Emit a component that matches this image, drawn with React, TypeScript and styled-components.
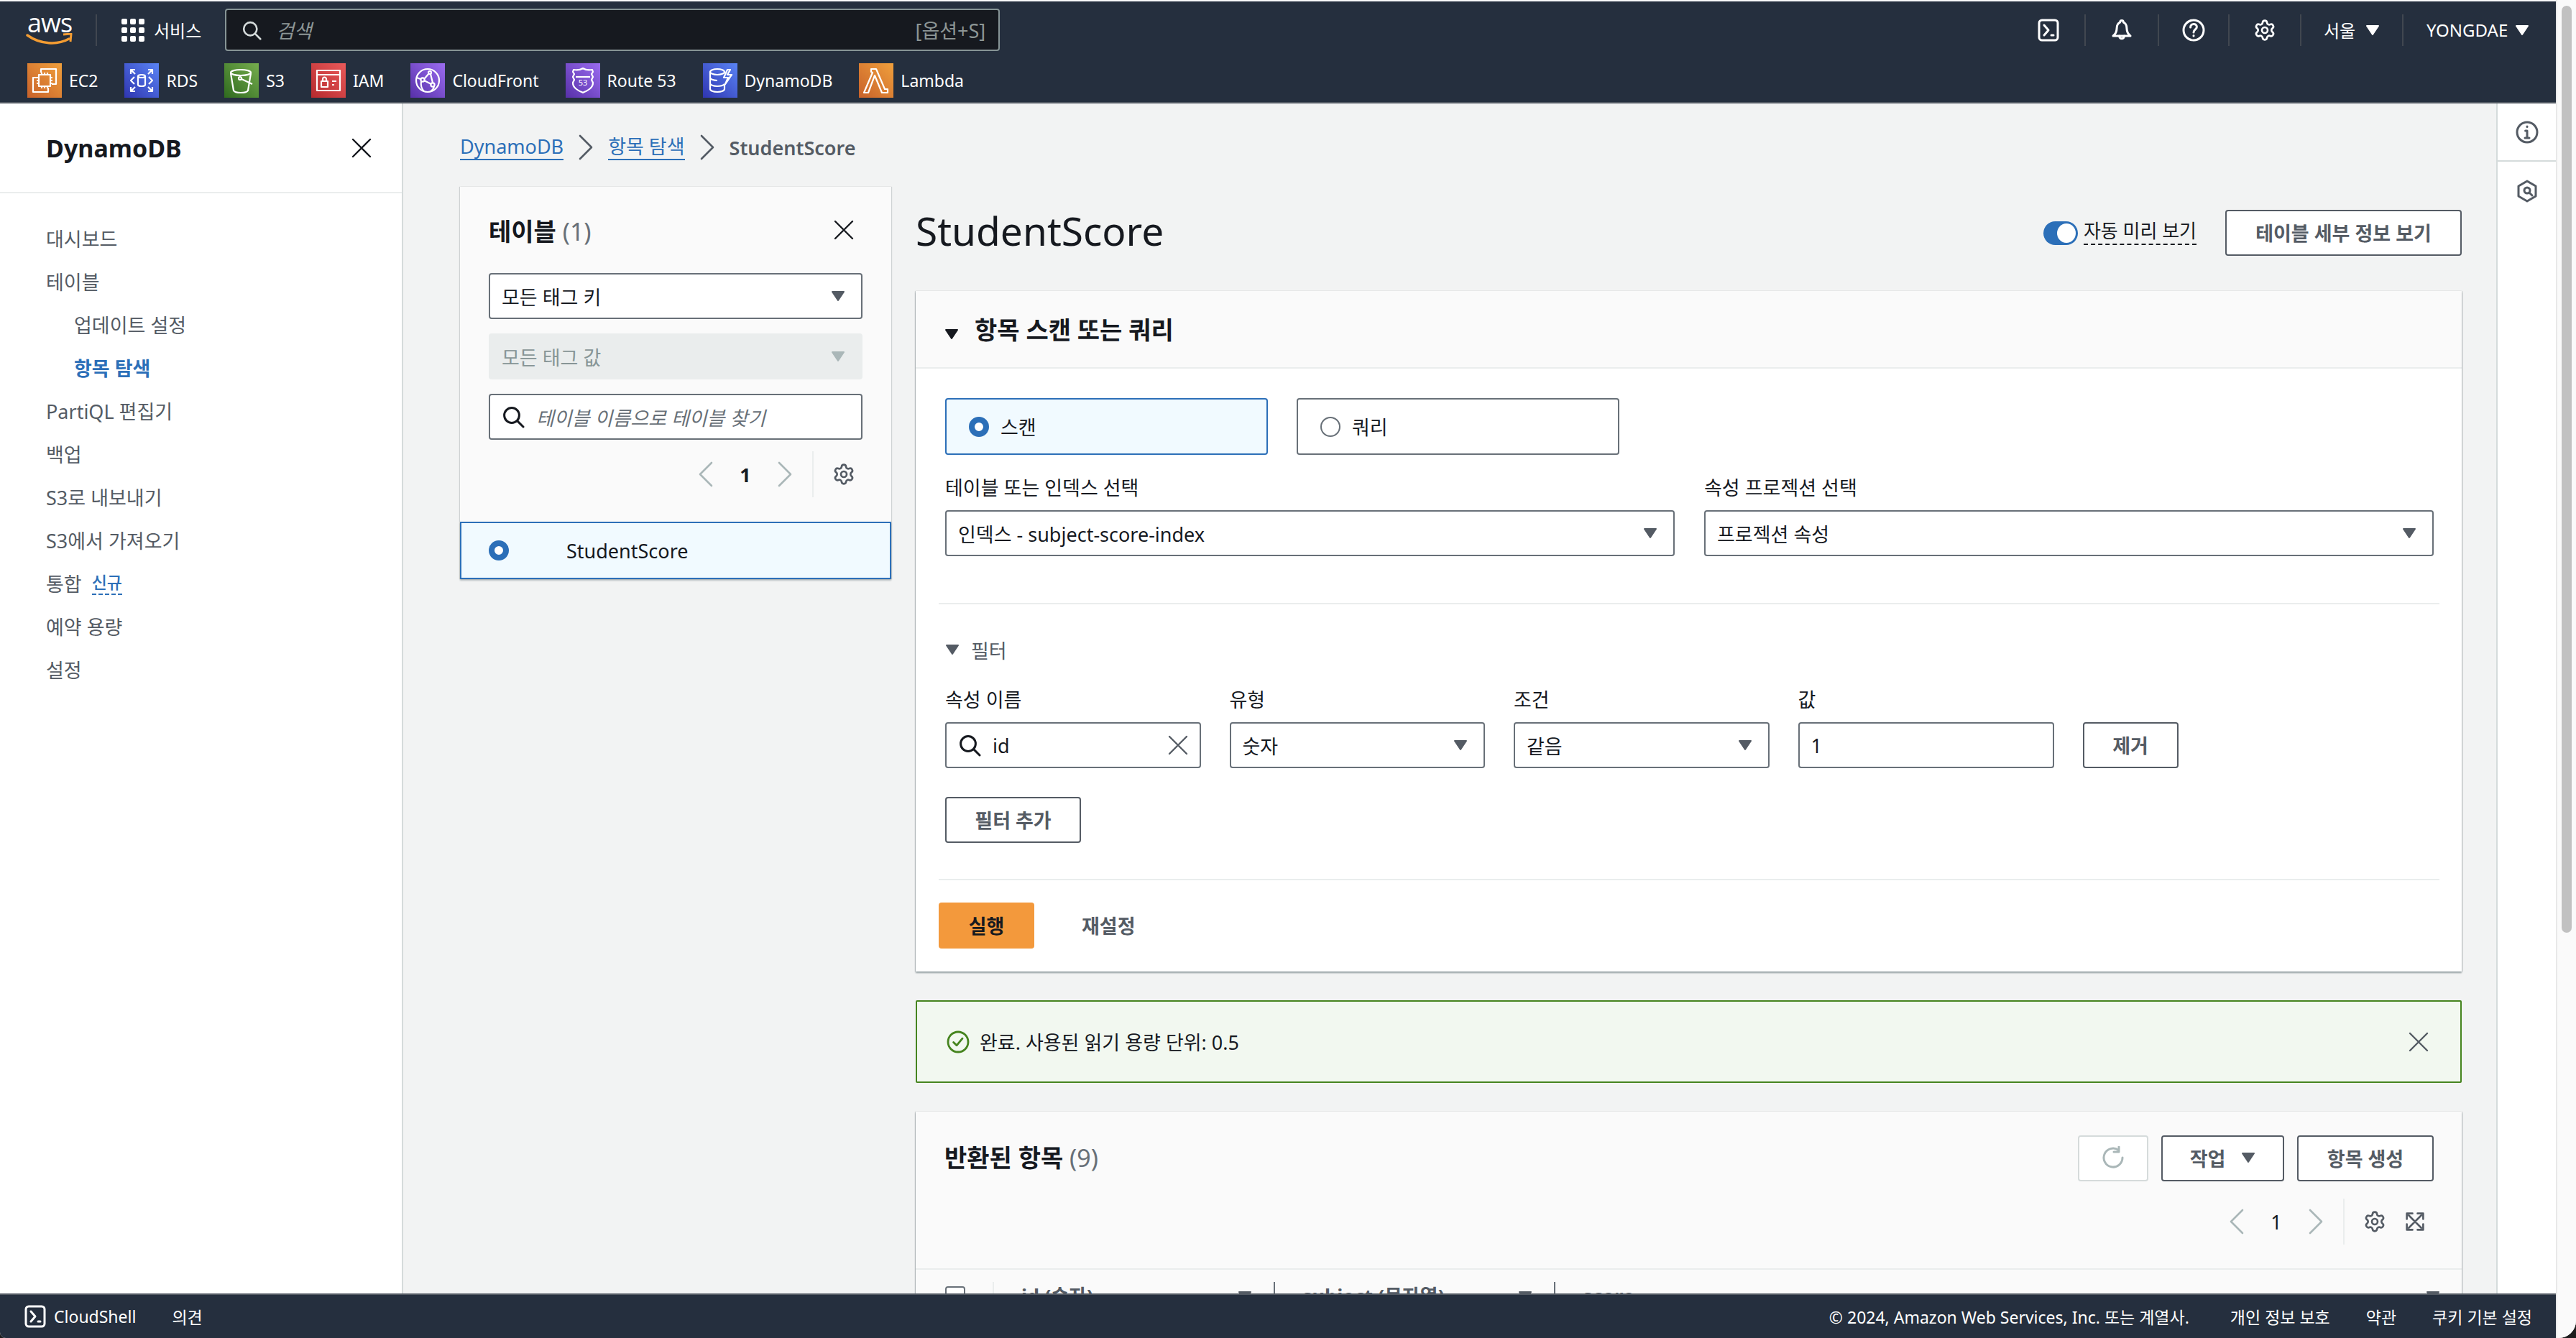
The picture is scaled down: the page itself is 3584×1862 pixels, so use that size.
import React from 'react';
import styled, {createGlobalStyle} from 'styled-components';
import {Settings} from 'lucide-react';

const GlobalStyle = createGlobalStyle`
  * { box-sizing: border-box; }
  html, body { margin: 0; padding: 0; height: 100%; overflow: hidden; background: #1c1c1c; }
  body {
    font-family: "Noto Sans", "Noto Sans CJK KR", sans-serif;
    font-size: 27px;
    color: #16191f;
  }
`

const Window = styled.div`
  display: flex;
  width: 3584px;
  height: 1862px;
  overflow: hidden;
  background: #fafafa;
  border-radius: 0 0 24px 8px;
`
const Page = styled.div`
  flex: 1;
  min-width: 0;
  display: flex;
  flex-direction: column;
`
const ScrollTrack = styled.div`
  width: 28px;
  flex: none;
  padding: 8px 6px 0 6px;
  background: #fafafa;
  border-left: 2px solid #e8e8e8;
`
const ScrollThumb = styled.div`
  height: 1290px;
  border-radius: 8px;
  background: #c1c1c1;
`

/* top navigation */
const TopNav = styled.header`
  flex: none;
  margin-top: 2px;
  padding: 10px 37px 6px 38px;
  background: #252f3e;
  border-bottom: 2px solid #545b64;
  color: #fff;
`
const NavRow = styled.div`
  display: flex;
  align-items: center;
  height: 59px;
`
const LogoBox = styled.div`
  position: relative;
  width: 62px;
  height: 48px;
  flex: none;
`
const LogoText = styled.span`
  position: absolute;
  left: 0;
  top: -10px;
  font-family: "Open Sans", sans-serif;
  font-size: 36px;
  font-weight: 500;
  letter-spacing: -1px;
  line-height: 48px;
`
const LogoSmile = styled.svg`
  position: absolute;
  left: -2px;
  top: 28px;
  width: 66px;
  height: 20px;
`
const NavDivider = styled.div`
  width: 2px;
  height: 44px;
  margin: 0 34px 0 33px;
  background: #414750;
`
const GridIcon = styled.svg`
  width: 32px;
  height: 32px;
  flex: none;
  fill: #fff;
`
const ServicesLabel = styled.span`
  margin-left: 13px;
  font-size: 24px;
  white-space: nowrap;
`
const SearchBox = styled.div`
  display: flex;
  align-items: center;
  width: 1078px;
  height: 59px;
  margin-left: 33px;
  padding: 0 18px 0 21px;
  background: #16191f;
  border: 2px solid #879596;
  border-radius: 4px;
  color: #d5dbdb;
`
const SearchHint = styled.span`
  margin-left: 20px;
  font-size: 27px;
  font-style: italic;
  color: #8d9696;
`
const SearchKey = styled.span`
  margin-left: auto;
  font-size: 27px;
  color: #8d9696;
`
const NavRight = styled.div`
  display: flex;
  align-items: center;
  height: 44px;
  margin-left: auto;
`
const Utility = styled.div<{$w: number; $start?: number}>`
  display: flex;
  align-items: center;
  justify-content: ${p => (p.$start ? 'flex-start' : 'center')};
  gap: ${p => (p.$start ? 10 : 14)}px;
  width: ${p => p.$w}px;
  height: 44px;
  padding-left: ${p => p.$start ?? 0}px;
  font-size: 24px;
  white-space: nowrap;
  &:not(:first-child) { border-left: 2px solid #414750; }
`
const ServiceRow = styled.nav`
  display: flex;
  gap: 37px;
  margin-top: 17px;
`
const ServiceItem = styled.div`
  display: flex;
  align-items: center;
  gap: 10px;
  font-size: 23px;
  line-height: 48px;
  white-space: nowrap;
`
const ServiceIcon = styled.svg<{$from: string; $to: string}>`
  width: 48px;
  height: 48px;
  flex: none;
  background: linear-gradient(45deg, ${p => p.$from}, ${p => p.$to});
  fill: none;
  stroke: #fff;
  stroke-width: 2.2;
  stroke-linejoin: round;
`

/* main area */
const Body = styled.div`
  flex: 1;
  min-height: 0;
  display: flex;
  overflow: hidden;
`
const SideNav = styled.aside`
  width: 561px;
  flex: none;
  background: #fff;
  border-right: 2px solid #d5dbdb;
`
const SideHead = styled.div`
  display: flex;
  align-items: center;
  justify-content: space-between;
  height: 125px;
  padding: 0 40px 0 64px;
  border-bottom: 2px solid #eaeded;
`
const SideTitle = styled.h2`
  margin: 0;
  font-size: 34px;
  font-weight: 700;
`
const SideList = styled.ul`
  list-style: none;
  margin: 32px 0 0 0;
  padding: 0 0 0 64px;
`
const SideItem = styled.li<{$sub?: boolean; $active?: boolean}>`
  display: flex;
  align-items: center;
  gap: 14px;
  height: 60px;
  padding-left: ${p => (p.$sub ? 39 : 0)}px;
  font-weight: ${p => (p.$active ? 700 : 400)};
  color: ${p => (p.$active ? '#2c6fb8' : '#545b64')};
`
const NewTag = styled.span`
  font-size: 23px;
  font-weight: 500;
  color: #2c6fb8;
  border-bottom: 2px dashed #2c6fb8;
  line-height: 32px;
`
const Content = styled.main`
  flex: 1;
  min-width: 0;
  padding: 0 48px 0 79px;
  background: #f2f3f3;
  overflow: hidden;
`
const Crumbs = styled.div`
  display: flex;
  align-items: center;
  gap: 19px;
  height: 116px;
  padding-top: 6px;
`
const CrumbLink = styled.span`
  color: #2c6fb8;
  border-bottom: 2px solid #2c6fb8;
  line-height: 34px;
`
const CrumbCurrent = styled.span`
  color: #545b64;
  font-weight: 600;
`
const Columns = styled.div`
  display: flex;
  align-items: flex-start;
  gap: 34px;
`
const TablePane = styled.section`
  width: 600px;
  flex: none;
  background: #fafafa;
  box-shadow: 1px 0 1px rgba(0, 28, 36, .15), -1px 0 1px rgba(0, 28, 36, .15);
`
const PaneInner = styled.div`
  padding: 34px 40px 0 40px;
`
const PaneHead = styled.div`
  display: flex;
  align-items: center;
  justify-content: space-between;
  height: 52px;
  margin-bottom: 34px;
  padding-right: 10px;
`
const HeadText = styled.h3`
  margin: 0;
  font-size: 34px;
  font-weight: 700;
  white-space: nowrap;
`
const HeadCount = styled.span`
  color: #687078;
  font-weight: 400;
`
const Stack = styled.div`
  display: flex;
  flex-direction: column;
  gap: 20px;
`
const SelectBox = styled.div<{$disabled?: boolean}>`
  display: flex;
  align-items: center;
  justify-content: space-between;
  height: 64px;
  padding: 0 22px 0 16px;
  background: ${p => (p.$disabled ? '#eaeded' : '#fff')};
  border: 2px solid ${p => (p.$disabled ? '#eaeded' : '#687078')};
  border-radius: 4px;
  color: ${p => (p.$disabled ? '#879596' : '#16191f')};
  white-space: nowrap;
`
const InputBox = styled.div`
  display: flex;
  align-items: center;
  gap: 16px;
  height: 64px;
  padding: 0 14px 0 16px;
  background: #fff;
  border: 2px solid #687078;
  border-radius: 4px;
  color: #16191f;
`
const InputHint = styled.span`
  font-style: italic;
  color: #687078;
  white-space: nowrap;
`
const InputEnd = styled.span`
  display: flex;
  margin-left: auto;
  color: #545b64;
`
const Pager = styled.div`
  display: flex;
  align-items: center;
  justify-content: flex-end;
  height: 64px;
  margin-top: 16px;
  padding-right: 10px;
`
const PagerNum = styled.span<{$bold?: boolean}>`
  width: 86px;
  text-align: center;
  font-size: 27px;
  font-weight: ${p => (p.$bold ? 700 : 400)};
`
const PagerDivider = styled.div`
  width: 2px;
  height: 64px;
  margin: 0 26px;
  background: #eaeded;
`
const TableRow = styled.div`
  display: flex;
  align-items: center;
  height: 80px;
  margin-top: 34px;
  padding-left: 38px;
  background: #f1faff;
  border: 2px solid #2c6fb8;
  box-shadow: 0 2px 2px rgba(0, 28, 36, .25);
`
const RadioDot = styled.span<{$on?: boolean}>`
  width: 28px;
  height: 28px;
  flex: none;
  border-radius: 50%;
  background: #fff;
  border: ${p => (p.$on ? '8px solid #2c6fb8' : '2px solid #687078')};
`
const RowName = styled.span`
  margin-left: 80px;
`
const RightCol = styled.div`
  flex: 1;
  min-width: 0;
  display: flex;
  flex-direction: column;
`
const TitleRow = styled.div`
  display: flex;
  align-items: center;
  margin-top: -116px;
  padding: 148px 0 49px 0;
`
const PageTitle = styled.h1`
  margin: -6px 0 0 0;
  font-size: 55px;
  font-weight: 400;
  line-height: 64px;
`
const Toggle = styled.span`
  position: relative;
  width: 48px;
  height: 33px;
  margin: 0 8px 0 auto;
  border-radius: 17px;
  background: #2c6fb8;
  &::after {
    content: "";
    position: absolute;
    right: 3px;
    top: 3px;
    width: 26px;
    height: 27px;
    border-radius: 50%;
    background: #fff;
  }
`
const ToggleLabel = styled.span`
  margin: -4px 40px 0 0;
  font-size: 26px;
  line-height: 36px;
  border-bottom: 2px dashed #16191f;
`
const OutlineButton = styled.button<{$w?: number; $off?: boolean}>`
  display: inline-flex;
  align-items: center;
  justify-content: center;
  gap: 22px;
  width: ${p => (p.$w ? `${p.$w}px` : 'auto')};
  height: 64px;
  padding: 0 0 2px 0;
  background: #fff;
  border: 2px solid ${p => (p.$off ? '#d5dbdb' : '#545b64')};
  border-radius: 4px;
  font-family: inherit;
  font-size: 27px;
  font-weight: 700;
  color: ${p => (p.$off ? '#aab7b8' : '#545b64')};
  white-space: nowrap;
`
const Panel = styled.section`
  background: #fff;
  box-shadow: 0 2px 2px rgba(0, 28, 36, .4), 1px 0 1px rgba(0, 28, 36, .15), -1px 0 1px rgba(0, 28, 36, .15);
`
const PanelHead = styled.div`
  display: flex;
  align-items: center;
  gap: 22px;
  height: 108px;
  padding: 0 0 2px 40px;
  background: #fafafa;
  border-bottom: 2px solid #eaeded;
`
const HeadCaret = styled.span`
  display: flex;
  margin-top: 16px;
`
const PanelBody = styled.div`
  padding: 41px 39px 32px 41px;
`
const TileRow = styled.div`
  display: grid;
  grid-template-columns: 449px 449px;
  gap: 40px;
`
const Tile = styled.div<{$on?: boolean}>`
  display: flex;
  align-items: center;
  gap: 16px;
  height: 79px;
  padding-left: 31px;
  background: ${p => (p.$on ? '#f1faff' : '#fff')};
  border: 2px solid ${p => (p.$on ? '#2c6fb8' : '#687078')};
  border-radius: 4px;
`
const TwoCols = styled.div`
  display: grid;
  grid-template-columns: 1fr 1fr;
  gap: 41px;
  margin-top: 26px;
`
const FieldLabel = styled.div`
  height: 40px;
  margin-bottom: 11px;
  line-height: 40px;
  white-space: nowrap;
`
const Rule = styled.hr`
  height: 2px;
  margin: 0 -8px 0 -9px;
  border: none;
  background: #eaeded;
`
const RuleTop = styled(Rule)`
  margin-top: 65px;
`
const RuleBottom = styled(Rule)`
  margin-top: 50px;
`
const FilterHead = styled.div`
  display: flex;
  align-items: center;
  gap: 16px;
  height: 40px;
  margin-top: 43px;
  color: #545b64;
`
const FilterGrid = styled.div`
  display: grid;
  grid-template-columns: 355.5px 355.5px 355.5px 356px auto;
  justify-content: start;
  align-items: end;
  gap: 40px;
  margin-top: 30px;
`
const AddFilter = styled(OutlineButton)`
  display: flex;
  margin-top: 40px;
`
const ActionRow = styled.div`
  display: flex;
  align-items: center;
  gap: 66px;
  margin: 31px 0 0 -9px;
`
const PrimaryButton = styled.button`
  width: 133px;
  height: 64px;
  padding: 0 0 2px 0;
  background: #f3993c;
  border: none;
  border-radius: 4px;
  font-family: inherit;
  font-size: 27px;
  font-weight: 700;
  color: #16191f;
`
const LinkButton = styled.span`
  margin-top: -2px;
  font-weight: 700;
  color: #545b64;
`
const Alert = styled.div`
  display: flex;
  align-items: center;
  gap: 14px;
  height: 115px;
  margin: 40px 0;
  padding: 0 42px 0 41px;
  background: #f2f8f0;
  border: 2px solid #46841f;
  border-radius: 2px;
`
const AlertClose = styled.span`
  display: flex;
  margin-left: auto;
  color: #545b64;
`
const ResultHead = styled.div`
  height: 220px;
  padding: 33px 39px 0 40px;
  background: #fafafa;
  border-bottom: 2px solid #eaeded;
`
const ResultTop = styled.div`
  display: flex;
  align-items: center;
  justify-content: space-between;
`
const ResultTitle = styled(HeadText)`
  margin-top: -6px;
`
const ResultButtons = styled.div`
  display: flex;
  gap: 18px;
`
const ResultPager = styled(Pager)`
  margin-top: 24px;
  padding-right: 12px;
`
const GapIcon = styled.span`
  display: flex;
  margin-right: 26px;
`
const TableHead = styled.div`
  display: flex;
  height: 200px;
  padding-top: 17px;
  background: #fafafa;
`
const CheckCell = styled.div`
  width: 107px;
  padding: 6px 0 0 41px;
`
const CheckBox = styled.span`
  display: block;
  width: 28px;
  height: 28px;
  background: #fff;
  border: 2px solid #687078;
  border-radius: 4px;
`
const HeadCell = styled.div<{$w?: number; $dark?: boolean}>`
  display: flex;
  justify-content: space-between;
  flex: ${p => (p.$w ? `0 0 ${p.$w}px` : 1)};
  height: 70px;
  padding: 2px 30px 0 38px;
  border-left: 2px solid ${p => (p.$dark ? '#687078' : '#eaeded')};
  font-weight: 700;
  line-height: 36px;
  color: #545b64;
`
const SortMark = styled.span`
  display: flex;
  margin-top: 10px;
`
const ToolRail = styled.aside`
  width: 83px;
  flex: none;
  background: #fff;
  border-left: 2px solid #d5dbdb;
`
const ToolCell = styled.div<{$h: number}>`
  display: flex;
  align-items: center;
  justify-content: center;
  height: ${p => p.$h}px;
  color: #545b64;
  &:first-child { border-bottom: 2px solid #d5dbdb; }
`

/* footer */
const Footer = styled.footer`
  flex: none;
  display: flex;
  align-items: center;
  height: 62px;
  padding: 0 33px 0 33px;
  background: #252f3e;
  border-top: 2px solid #545b64;
  color: #fff;
  font-size: 23px;
  white-space: nowrap;
`
const FootShell = styled.span`
  display: flex;
  align-items: center;
  gap: 10px;
`
const FootFeedback = styled.span`
  margin-left: 50px;
`
const FootLegal = styled.div`
  display: flex;
  gap: 50px;
  margin-left: auto;
`
const FootCopy = styled.span`
  margin-right: 7px;
`

const Line = styled.svg<{$size?: number; $w?: number; $h?: number; $sw?: number; $color?: string}>`
  width: ${p => p.$w ?? p.$size ?? 32}px;
  height: ${p => p.$h ?? p.$size ?? 32}px;
  flex: none;
  fill: none;
  stroke: ${p => p.$color ?? 'currentColor'};
  stroke-width: ${p => p.$sw ?? 1.2};
  stroke-linecap: round;
  stroke-linejoin: round;
`
const CaretSvg = styled.svg<{$color?: string}>`
  width: 20px;
  height: 16px;
  flex: none;
  fill: ${p => p.$color ?? '#545b64'};
  stroke: ${p => p.$color ?? '#545b64'};
  stroke-width: 2;
  stroke-linejoin: round;
`

const Caret = ({color}: {color?: string}) => (
    <CaretSvg $color={color} viewBox="0 0 20 16"><path d="M2 2h16l-8 12z"/></CaretSvg>
)
const CloseIcon = ({size = 32}: {size?: number}) => (
    <Line $size={size} viewBox="0 0 16 16"><path d="M2 2l12 12M14 2L2 14"/></Line>
)
const SearchIcon = ({size = 32}: {size?: number}) => (
    <Line $size={size} $sw={1.5} viewBox="0 0 16 16"><circle cx="7" cy="7" r="5.2"/><path d="M10.8 10.8L15 15"/></Line>
)
const AngleLeft = ({color = '#aab7b8'}: {color?: string}) => (
    <Line $w={24} $h={36} $color={color} viewBox="0 0 12 18" $sw={1.3}><path d="M10 1L2 9l8 8"/></Line>
)
const AngleRight = ({color = '#aab7b8'}: {color?: string}) => (
    <Line $w={24} $h={36} $color={color} viewBox="0 0 12 18" $sw={1.3}><path d="M2 1l8 8-8 8"/></Line>
)
const ShellIcon = ({size = 32}: {size?: number}) => (
    <Line $size={size} $sw={1.5} viewBox="0 0 16 16">
        <rect x="1.5" y="1" width="13" height="14" rx="2"/>
        <path d="M5 4.5L8 8l-3 3.5M10 11.5h1.5"/>
    </Line>
)
const Gear = ({size = 32}: {size?: number}) => <Settings size={size} strokeWidth={2} color="#545b64"/>

function Dropdown({text, disabled}: {text: string; disabled?: boolean}) {
    return (
        <SelectBox $disabled={disabled}>
            {text}
            <Caret color={disabled ? '#aab7b8' : undefined}/>
        </SelectBox>
    )
}

const services = [
    {
        name: 'EC2', from: '#c8612a', to: '#f0a03c', icon: (
            <>
                <path d="M19 13V8h21v21h-6M14 20H8v20h21v-6"/>
                <rect x="16" y="16" width="16" height="16"/>
                <path d="M20 16v-3M24 16v-3M28 16v-3M20 35v-3M24 35v-3M28 35v-3M13 20h3M13 24h3M13 28h3M32 20h3M32 24h3M32 28h3"/>
            </>
        )
    },
    {
        name: 'RDS', from: '#2f35b0', to: '#5a84f5', icon: (
            <>
                <path d="M9 15V9h6M39 15V9h-6M9 33v6h6M39 33v6h-6M9 9l6 6M39 9l-6 6M9 39l6-6M39 39l-6-6"/>
                <ellipse cx="24" cy="18" rx="5" ry="2"/>
                <path d="M19 18v12c0 1 2 2 5 2s5-1 5-2V18M14 19l-5 5 5 5M34 19l5 5-5 5"/>
            </>
        )
    },
    {
        name: 'S3', from: '#2f6a1e', to: '#76ad4e', icon: (
            <>
                <ellipse cx="23" cy="13" rx="14" ry="4"/>
                <path d="M9 14l4 24c1 2 5 3 10 3s9-1 10-3l4-24M24 22l15 7"/>
                <circle cx="22" cy="21" r="2"/>
            </>
        )
    },
    {
        name: 'IAM', from: '#b52a2e', to: '#ea5a5a', icon: (
            <>
                <rect x="8" y="10" width="32" height="28"/>
                <path d="M8 16h32M29 25h6M29 30h3"/>
                <rect x="14" y="25" width="9" height="8"/>
                <path d="M16 25v-3a2.5 2.5 0 0 1 5 0v3"/>
            </>
        )
    },
    {
        name: 'CloudFront', from: '#5730a8', to: '#9b6cf0', icon: (
            <>
                <circle cx="24" cy="24" r="16"/>
                <circle cx="17" cy="23" r="2.6"/>
                <circle cx="31" cy="30" r="2.6"/>
                <circle cx="27" cy="13" r="2"/>
                <path d="M19 22l7-8M19 24l10 5M28 15l3 12M15 25c-1 6 1 11 4 14M33 32c-1 4-3 6-5 7M9 20c2 1 4 2 6 2"/>
            </>
        )
    },
    {
        name: 'Route 53', from: '#5730a8', to: '#9b6cf0', icon: (
            <>
                <path d="M24 7c3 2 8 3 13 2l1 3-2 3 2 4-2 4 2 4c0 8-8 11-14 14-6-3-14-6-14-14l2-4-2-4 2-4-2-3 1-3c5 1 10 0 13-2z"/>
                <path d="M14 19h20"/>
                <text x="24" y="31" fontSize="11" textAnchor="middle" fill="#fff" stroke="none" fontFamily="Noto Sans">53</text>
            </>
        )
    },
    {
        name: 'DynamoDB', from: '#2f35b0', to: '#5a84f5', icon: (
            <>
                <ellipse cx="20" cy="12" rx="10" ry="4"/>
                <path d="M10 12v24c0 2 4 4 10 4s10-2 10-4v-6M10 20c0 2 4 4 10 4M10 28c0 2 4 4 10 4s8-1 10-3"/>
                <path d="M34 9l-5 11h6l-4 9 9-13h-6l4-7z"/>
            </>
        )
    },
    {
        name: 'Lambda', from: '#c8612a', to: '#f0a03c', icon: (
            <path d="M17 8h7l12 28h4v5h-8L22 17l-9 24H7l12-28-2-1z"/>
        )
    },
]

const gridDots = [0, 12, 24].flatMap(y => [0, 12, 24].map(x => ({x, y})))
const sideItems = ['대시보드', '테이블']
const sideItemsRest = ['PartiQL 편집기', '백업', 'S3로 내보내기', 'S3에서 가져오기']

function App() {
    return (
        <Window>
            <GlobalStyle/>
            <Page>
                <TopNav>
                    <NavRow>
                        <LogoBox>
                            <LogoText>aws</LogoText>
                            <LogoSmile viewBox="0 0 66 20">
                                <path d="M2 3c18 13 42 14 58 5" fill="none" stroke="#f39c32" strokeWidth="3.5" strokeLinecap="round"/>
                                <path d="M52 2l11-1-1 11" fill="none" stroke="#f39c32" strokeWidth="3" strokeLinejoin="round"/>
                            </LogoSmile>
                        </LogoBox>
                        <NavDivider/>
                        <GridIcon viewBox="0 0 32 32">
                            {gridDots.map(d => <rect key={`${d.x}-${d.y}`} x={d.x} y={d.y} width="8" height="8" rx="2"/>)}
                        </GridIcon>
                        <ServicesLabel>서비스</ServicesLabel>
                        <SearchBox>
                            <SearchIcon size={28}/>
                            <SearchHint>검색</SearchHint>
                            <SearchKey>[옵션+S]</SearchKey>
                        </SearchBox>
                        <NavRight>
                            <Utility $w={100}><ShellIcon/></Utility>
                            <Utility $w={102}>
                                <Line $size={32} $sw={1.5} viewBox="0 0 16 16">
                                    <path d="M8 1.2c-.8 0-1.2.7-1.2 1.4C5 3.3 4.5 5 4.5 7c0 2-.7 3.5-2.5 5h12c-1.8-1.5-2.5-3-2.5-5 0-2-.5-3.7-2.3-4.4 0-.7-.4-1.4-1.2-1.4z"/>
                                    <path d="M6.3 12c0 2.5 3.4 2.5 3.4 0"/>
                                </Line>
                            </Utility>
                            <Utility $w={98}>
                                <Line $size={32} $sw={1.5} viewBox="0 0 16 16">
                                    <circle cx="8" cy="8" r="7"/>
                                    <path d="M5.8 6c0-3 4.4-3 4.4-.2 0 1.7-2.2 1.7-2.2 3.7M8 11.8v.2"/>
                                </Line>
                            </Utility>
                            <Utility $w={100}><Settings size={32} strokeWidth={2} color="#fff"/></Utility>
                            <Utility $w={142}>서울<Caret color="#fff"/></Utility>
                            <Utility $w={177} $start={32}>YONGDAE<Caret color="#fff"/></Utility>
                        </NavRight>
                    </NavRow>
                    <ServiceRow>
                        {services.map(s => (
                            <ServiceItem key={s.name}>
                                <ServiceIcon $from={s.from} $to={s.to} viewBox="0 0 48 48">{s.icon}</ServiceIcon>
                                {s.name}
                            </ServiceItem>
                        ))}
                    </ServiceRow>
                </TopNav>

                <Body>
                    <SideNav>
                        <SideHead>
                            <SideTitle>DynamoDB</SideTitle>
                            <CloseIcon/>
                        </SideHead>
                        <SideList>
                            {sideItems.map(t => <SideItem key={t}>{t}</SideItem>)}
                            <SideItem $sub>업데이트 설정</SideItem>
                            <SideItem $sub $active>항목 탐색</SideItem>
                            {sideItemsRest.map(t => <SideItem key={t}>{t}</SideItem>)}
                            <SideItem>통합 <NewTag>신규</NewTag></SideItem>
                            <SideItem>예약 용량</SideItem>
                            <SideItem>설정</SideItem>
                        </SideList>
                    </SideNav>

                    <Content>
                        <Crumbs>
                            <CrumbLink>DynamoDB</CrumbLink>
                            <AngleRight color="#545b64"/>
                            <CrumbLink>항목 탐색</CrumbLink>
                            <AngleRight color="#545b64"/>
                            <CrumbCurrent>StudentScore</CrumbCurrent>
                        </Crumbs>
                        <Columns>
                            <TablePane>
                                <PaneInner>
                                    <PaneHead>
                                        <HeadText>테이블 <HeadCount>(1)</HeadCount></HeadText>
                                        <CloseIcon/>
                                    </PaneHead>
                                    <Stack>
                                        <Dropdown text="모든 태그 키"/>
                                        <Dropdown text="모든 태그 값" disabled/>
                                        <InputBox>
                                            <SearchIcon/>
                                            <InputHint>테이블 이름으로 테이블 찾기</InputHint>
                                        </InputBox>
                                    </Stack>
                                    <Pager>
                                        <AngleLeft/>
                                        <PagerNum $bold>1</PagerNum>
                                        <AngleRight/>
                                        <PagerDivider/>
                                        <Gear/>
                                    </Pager>
                                </PaneInner>
                                <TableRow>
                                    <RadioDot $on/>
                                    <RowName>StudentScore</RowName>
                                </TableRow>
                            </TablePane>

                            <RightCol>
                                <TitleRow>
                                    <PageTitle>StudentScore</PageTitle>
                                    <Toggle/>
                                    <ToggleLabel>자동 미리 보기</ToggleLabel>
                                    <OutlineButton $w={329}>테이블 세부 정보 보기</OutlineButton>
                                </TitleRow>

                                <Panel>
                                    <PanelHead>
                                        <HeadCaret><Caret color="#16191f"/></HeadCaret>
                                        <HeadText>항목 스캔 또는 쿼리</HeadText>
                                    </PanelHead>
                                    <PanelBody>
                                        <TileRow>
                                            <Tile $on><RadioDot $on/>스캔</Tile>
                                            <Tile><RadioDot/>쿼리</Tile>
                                        </TileRow>
                                        <TwoCols>
                                            <div>
                                                <FieldLabel>테이블 또는 인덱스 선택</FieldLabel>
                                                <Dropdown text="인덱스 - subject-score-index"/>
                                            </div>
                                            <div>
                                                <FieldLabel>속성 프로젝션 선택</FieldLabel>
                                                <Dropdown text="프로젝션 속성"/>
                                            </div>
                                        </TwoCols>
                                        <RuleTop/>
                                        <FilterHead><Caret/>필터</FilterHead>
                                        <FilterGrid>
                                            <div>
                                                <FieldLabel>속성 이름</FieldLabel>
                                                <InputBox>
                                                    <SearchIcon/>
                                                    id
                                                    <InputEnd><CloseIcon/></InputEnd>
                                                </InputBox>
                                            </div>
                                            <div>
                                                <FieldLabel>유형</FieldLabel>
                                                <Dropdown text="숫자"/>
                                            </div>
                                            <div>
                                                <FieldLabel>조건</FieldLabel>
                                                <Dropdown text="같음"/>
                                            </div>
                                            <div>
                                                <FieldLabel>값</FieldLabel>
                                                <InputBox>1</InputBox>
                                            </div>
                                            <OutlineButton $w={133}>제거</OutlineButton>
                                        </FilterGrid>
                                        <AddFilter $w={189}>필터 추가</AddFilter>
                                        <RuleBottom/>
                                        <ActionRow>
                                            <PrimaryButton>실행</PrimaryButton>
                                            <LinkButton>재설정</LinkButton>
                                        </ActionRow>
                                    </PanelBody>
                                </Panel>

                                <Alert>
                                    <Line $size={32} $sw={1.4} $color="#46841f" viewBox="0 0 16 16">
                                        <circle cx="8" cy="8" r="7"/>
                                        <path d="M4.8 8.2L7 10.4l4-4.8"/>
                                    </Line>
                                    완료. 사용된 읽기 용량 단위: 0.5
                                    <AlertClose><CloseIcon/></AlertClose>
                                </Alert>

                                <Panel>
                                    <ResultHead>
                                        <ResultTop>
                                            <ResultTitle>반환된 항목 <HeadCount>(9)</HeadCount></ResultTitle>
                                            <ResultButtons>
                                                <OutlineButton $w={98} $off>
                                                    <Line $size={32} $sw={1.5} viewBox="0 0 16 16">
                                                        <path d="M14.5 8a6.5 6.5 0 1 1-2.8-5.3"/>
                                                        <path d="M12 .5V4H8.5"/>
                                                    </Line>
                                                </OutlineButton>
                                                <OutlineButton $w={171}>작업<Caret/></OutlineButton>
                                                <OutlineButton $w={190}>항목 생성</OutlineButton>
                                            </ResultButtons>
                                        </ResultTop>
                                        <ResultPager>
                                            <AngleLeft/>
                                            <PagerNum>1</PagerNum>
                                            <AngleRight/>
                                            <PagerDivider/>
                                            <GapIcon><Gear/></GapIcon>
                                            <Line $size={28} $sw={1.5} $color="#545b64" viewBox="0 0 16 16">
                                                <path d="M1.5 6V1.5H6M10 1.5h4.5V6M14.5 10v4.5H10M6 14.5H1.5V10M3 3l10 10M13 3L3 13"/>
                                            </Line>
                                        </ResultPager>
                                    </ResultHead>
                                    <TableHead>
                                        <CheckCell><CheckBox/></CheckCell>
                                        <HeadCell $w={391}>id (숫자)<SortMark><Caret/></SortMark></HeadCell>
                                        <HeadCell $w={390} $dark>subject (문자열)<SortMark><Caret/></SortMark></HeadCell>
                                        <HeadCell $dark>score<SortMark><Caret/></SortMark></HeadCell>
                                    </TableHead>
                                </Panel>
                            </RightCol>
                        </Columns>
                    </Content>

                    <ToolRail>
                        <ToolCell $h={81}>
                            <Line $size={32} $sw={1.5} viewBox="0 0 16 16">
                                <circle cx="8" cy="8" r="7"/>
                                <path d="M8 7v5M6.5 12h3M6.8 7H8M8 4v.3"/>
                            </Line>
                        </ToolCell>
                        <ToolCell $h={82}>
                            <Line $size={32} $sw={1.5} viewBox="0 0 16 16">
                                <path d="M8 1l6 3.5v7L8 15l-6-3.5v-7z"/>
                                <circle cx="8" cy="7.5" r="2"/>
                                <path d="M9.5 9l2 2"/>
                            </Line>
                        </ToolCell>
                    </ToolRail>
                </Body>

                <Footer>
                    <FootShell><ShellIcon/>CloudShell</FootShell>
                    <FootFeedback>의견</FootFeedback>
                    <FootLegal>
                        <FootCopy>© 2024, Amazon Web Services, Inc. 또는 계열사.</FootCopy>
                        <span>개인 정보 보호</span>
                        <span>약관</span>
                        <span>쿠키 기본 설정</span>
                    </FootLegal>
                </Footer>
            </Page>
            <ScrollTrack><ScrollThumb/></ScrollTrack>
        </Window>
    );
}

export default App;
